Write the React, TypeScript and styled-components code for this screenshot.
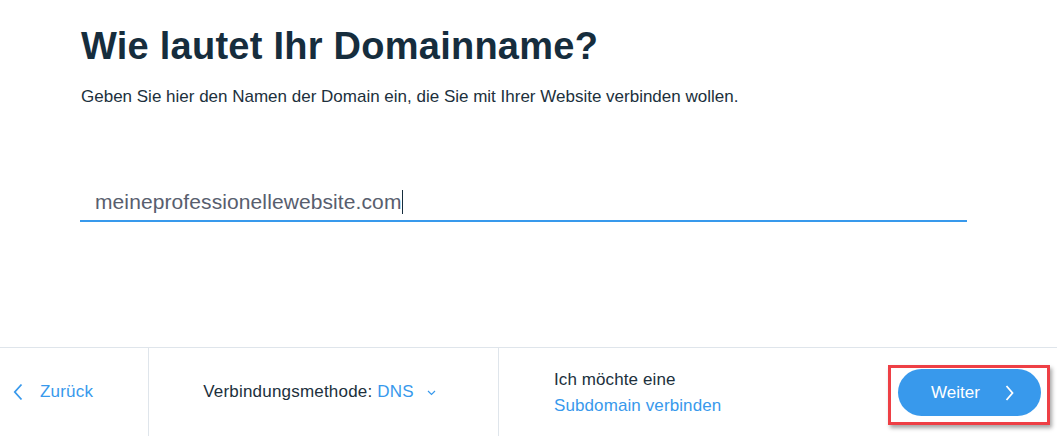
import React from "react";
import styled, { createGlobalStyle } from "styled-components";

const GlobalStyle = createGlobalStyle`
  html, body { margin: 0; padding: 0; background: #ffffff; }
  body { font-family: "Liberation Sans", Arial, Helvetica, sans-serif; }
  * { box-sizing: border-box; }
`;

const Page = styled.div`
  display: flex;
  flex-direction: column;
  height: 436px;
  width: 1057px;
  overflow: hidden;
`;

const Main = styled.main`
  flex: 1;
  padding: 23px 0 0 81px;
`;

const Title = styled.h1`
  margin: 0;
  font-size: 38px;
  line-height: 46px;
  font-weight: 700;
  color: #162d3d;
  letter-spacing: 0.25px;
`;

const Subtitle = styled.p`
  margin: 18px 0 0;
  font-size: 17px;
  line-height: 20px;
  color: #20303c;
`;

const Field = styled.div`
  margin: 73px 0 0 -1px;
  width: 887px;
  height: 42px;
  padding: 9px 0 0 15px;
  border-bottom: 2px solid #3899ec;
  display: flex;
  align-items: flex-start;
`;

const FieldText = styled.span`
  font-size: 21px;
  line-height: 26px;
  color: #585e6e;
  font-weight: 400;
  letter-spacing: 0.1px;
`;

const Caret = styled.span`
  display: inline-block;
  width: 1px;
  height: 24px;
  margin-top: 1px;
  background: #162d3d;
`;

const Footer = styled.footer`
  height: 89px;
  border-top: 1px solid #dfe5eb;
  display: grid;
  grid-template-columns: 148px 350px 1fr auto;
`;

const Cell = styled.div<{ $divider?: boolean; $center?: boolean }>`
  display: flex;
  align-items: center;
  justify-content: ${(p) => (p.$center ? "center" : "flex-start")};
  padding-right: ${(p) => (p.$center ? "8px" : "0")};
  border-left: ${(p) => (p.$divider ? "1px solid #dfe5eb" : "none")};
`;

const BackButton = styled.button`
  margin-left: 13px;
  display: flex;
  align-items: center;
  gap: 17px;
  border: 0;
  background: none;
  padding: 0;
  font-family: inherit;
  font-size: 17px;
  letter-spacing: 0.2px;
  color: #3899ec;
  cursor: pointer;
`;

const MethodLabel = styled.span`
  font-size: 17px;
  letter-spacing: 0.2px;
  color: #20303c;
  display: flex;
  align-items: center;
`;

const Link = styled.span`
  color: #3899ec;
`;

const DropChevron = styled.svg`
  margin-left: 13px;
  margin-top: 2px;
`;

const SubdomainBox = styled.div`
  padding-left: 55px;
  font-size: 17px;
  line-height: 26px;
  letter-spacing: 0.1px;
  color: #20303c;
  margin-top: 2px;
`;

const ButtonCell = styled.div`
  display: flex;
  align-items: flex-start;
  padding: 17px 7px 0 0;
`;

const Highlight = styled.div`
  border: 3px solid #ee3f45;
  padding: 1px 6px 6px 7px;
  box-shadow: 2px 3px 4px rgba(0, 0, 0, 0.35);
`;

const NextButton = styled.button`
  width: 143px;
  height: 47px;
  border: 0;
  border-radius: 24px;
  background: #3899ec;
  color: #ffffff;
  font-family: inherit;
  font-size: 17px;
  display: flex;
  align-items: center;
  padding: 0 0 0 33px;
  gap: 25px;
  cursor: pointer;
`;

export default function App() {
  return (
    <>
      <GlobalStyle />
      <Page>
        <Main>
          <Title>Wie lautet Ihr Domainname?</Title>
          <Subtitle>
            Geben Sie hier den Namen der Domain ein, die Sie mit Ihrer Website verbinden wollen.
          </Subtitle>
          <Field>
            <FieldText>meineprofessionellewebsite.com</FieldText>
            <Caret />
          </Field>
        </Main>
        <Footer>
          <Cell>
            <BackButton>
              <svg width="10" height="18" viewBox="0 0 10 18" fill="none">
                <path d="M8.5 1.5L1.8 9L8.5 16.5" stroke="#3899ec" strokeWidth="1.8" />
              </svg>
              Zurück
            </BackButton>
          </Cell>
          <Cell $divider $center>
            <MethodLabel>
              Verbindungsmethode:&nbsp;<Link>DNS</Link>
              <DropChevron width="9" height="6" viewBox="0 0 9 6" fill="none">
                <path d="M1 1L4.5 4.5L8 1" stroke="#3899ec" strokeWidth="1.2" />
              </DropChevron>
            </MethodLabel>
          </Cell>
          <Cell $divider>
            <SubdomainBox>
              <div>Ich möchte eine</div>
              <Link>Subdomain verbinden</Link>
            </SubdomainBox>
          </Cell>
          <ButtonCell>
            <Highlight>
              <NextButton>
                Weiter
                <svg width="9" height="16" viewBox="0 0 9 16" fill="none">
                  <path d="M1.5 1L7.5 8L1.5 15" stroke="#ffffff" strokeWidth="1.8" />
                </svg>
              </NextButton>
            </Highlight>
          </ButtonCell>
        </Footer>
      </Page>
    </>
  );
}
